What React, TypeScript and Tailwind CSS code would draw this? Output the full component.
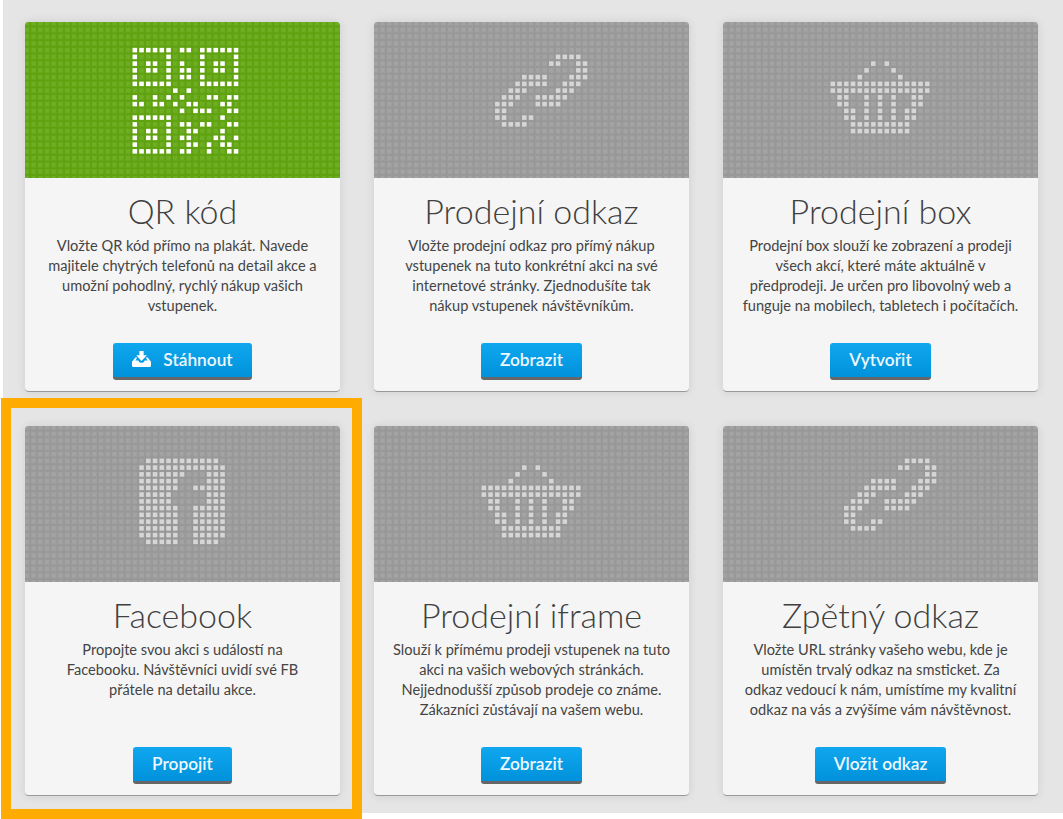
// dot icons: each row lists the [from, to] column runs that are lit
type Runs = number[][];

const qrIcon: Runs[] = [
  [[0, 5], [7, 8], [10, 15]],
  [[0, 0], [5, 5], [10, 10], [15, 15]],
  [[0, 0], [2, 3], [5, 5], [7, 7], [10, 10], [12, 13], [15, 15]],
  [[0, 0], [2, 3], [5, 5], [7, 8], [10, 10], [12, 13], [15, 15]],
  [[0, 0], [5, 5], [7, 8], [10, 10], [15, 15]],
  [[0, 5], [10, 15]],
  [[6, 6], [8, 8]],
  [[0, 0], [3, 3], [5, 5], [7, 7], [11, 12], [14, 15]],
  [[0, 1], [3, 4], [6, 6], [8, 9], [13, 14]],
  [[7, 7], [9, 11], [14, 15]],
  [[0, 5], [13, 13]],
  [[0, 0], [5, 5], [7, 8], [10, 11], [14, 15]],
  [[0, 0], [2, 3], [5, 5], [8, 9], [13, 13]],
  [[0, 0], [2, 3], [5, 5], [7, 8], [12, 13], [15, 15]],
  [[0, 0], [5, 5], [8, 9], [11, 11], [13, 14]],
  [[0, 5], [7, 8], [11, 11], [14, 15]],
];

const linkIcon: Runs[] = [
  [[9, 12]],
  [[8, 9], [12, 13]],
  [[12, 13]],
  [[4, 7], [11, 13]],
  [[3, 7], [10, 12]],
  [[2, 4], [9, 11]],
  [[1, 3], [6, 10]],
  [[0, 2], [6, 9]],
  [[0, 1]],
  [[0, 1], [4, 5]],
  [[1, 4]],
];

const basketIcon: Runs[] = [
  [[6, 6], [8, 8]],
  [[5, 5], [9, 9]],
  [[4, 4], [10, 10]],
  [[0, 14]],
  [[0, 14]],
  [[1, 2], [5, 5], [7, 7], [9, 9], [12, 13]],
  [[1, 2], [5, 5], [7, 7], [9, 9], [12, 13]],
  [[2, 3], [5, 5], [7, 7], [9, 9], [11, 12]],
  [[2, 3], [5, 5], [7, 7], [9, 9], [11, 12]],
  [[3, 11]],
  [[3, 11]],
];

const facebookIcon: Runs[] = [
  [[1, 11]],
  [[0, 12]],
  [[0, 6], [10, 12]],
  [[0, 5], [10, 12]],
  [[0, 5], [8, 12]],
  [[0, 4], [10, 12]],
  [[0, 4], [10, 12]],
  [[0, 5], [8, 12]],
  [[0, 5], [8, 12]],
  [[0, 5], [8, 12]],
  [[0, 5], [8, 12]],
  [[0, 5], [8, 12]],
  [[1, 5], [8, 11]],
];

const STEP = 6.75;
const DOT = 4.5;

function DotPanel({
  icon,
  col,
  row,
  active,
  id,
}: {
  icon: Runs[];
  col: number;
  row: number;
  active?: boolean;
  id: string;
}) {
  const dots: { x: number; y: number }[] = [];
  icon.forEach((runs, r) => {
    runs.forEach(([from, to]) => {
      for (let c = from; c <= to; c++) {
        dots.push({ x: (col + c) * STEP, y: (row + r) * STEP });
      }
    });
  });

  return (
    <svg width="315" height="156" className="block">
      <defs>
        <pattern id={id} x="-0.45" y="-1.15" width={STEP} height={STEP} patternUnits="userSpaceOnUse">
          <rect width={DOT} height={DOT} fill={active ? "#6dae23" : "#a3a3a3"} />
        </pattern>
      </defs>
      <rect width="315" height="156" fill={active ? "#60a110" : "#989898"} />
      <rect width="315" height="156" fill={`url(#${id})`} />
      <g transform="translate(-0.45 -1.15)">
        {dots.map((d, i) => (
          <rect key={i} x={d.x} y={d.y} width={DOT} height={DOT} fill={active ? "#ffffff" : "#d6d6d6"} />
        ))}
      </g>
    </svg>
  );
}

function DownloadIcon() {
  return (
    <svg width="19" height="16" viewBox="0 0 18 15" fill="#ffffff" className="mr-[12px] mb-[1px]">
      <path d="M7 0h4v4h3l-5 5.500L4 4h3z" />
      <path d="M0 14a1 1 0 0 0 1 1h16a1 1 0 0 0 1-1v-4l-3.200-4H13l1.800 3H12q-.5 2-2 2H8q-1.500 0-2-2H3.200L5 6H3.200L0 10z" />
    </svg>
  );
}

function Button({ children }: { children: React.ReactNode }) {
  return (
    <a
      href="#"
      className="flex h-[37.5px] items-center justify-center rounded-[3px] border-b-[3px] border-[#666666] bg-gradient-to-b from-[#10a7ef] to-[#0092db] px-[19px] text-[17.3px] font-semibold text-[#eef8fe]"
    >
      {children}
    </a>
  );
}

function Card({
  id,
  icon,
  col,
  row,
  active,
  title,
  lines,
  button,
  download,
}: {
  id: string;
  icon: Runs[];
  col: number;
  row: number;
  active?: boolean;
  title: string;
  lines: string[];
  button: string;
  download?: boolean;
}) {
  return (
    <div className="flex h-[370px] flex-col overflow-hidden rounded-[4px] border-b border-[#999999] bg-[#f5f5f5] shadow-[0_0_10px_rgba(0,0,0,0.1)]">
      <DotPanel id={id} icon={icon} col={col} row={row} active={active} />
      <h2 className="mt-[11px] text-center text-[34px] leading-[44px] font-light text-[#404040]">{title}</h2>
      <p className="mt-[3px] text-center text-[14.6px] leading-[20px] text-[#444444]">
        {lines.map((line) => (
          <span key={line} className="block">
            {line}
          </span>
        ))}
      </p>
      <div className="mt-auto mb-[11px] flex justify-center">
        <Button>
          {download && <DownloadIcon />}
          {button}
        </Button>
      </div>
    </div>
  );
}

export default function App() {
  return (
    <div className="h-[819px] bg-white">
      <div className="ml-[3px] h-[813px] bg-[#e5e5e5] pt-[22px] pl-[22px] font-['Lato',sans-serif]">
        <div className="grid grid-cols-[repeat(3,315px)] gap-[34px]">
          <Card
            id="p1"
            icon={qrIcon}
            col={16}
            row={4}
            active
            title="QR kód"
            lines={[
              "Vložte QR kód přímo na plakát. Navede",
              "majitele chytrých telefonů na detail akce a",
              "umožní pohodlný, rychlý nákup vašich",
              "vstupenek.",
            ]}
            button="Stáhnout"
            download
          />
          <Card
            id="p2"
            icon={linkIcon}
            col={18}
            row={5}
            title="Prodejní odkaz"
            lines={[
              "Vložte prodejní odkaz pro přímý nákup",
              "vstupenek na tuto konkrétní akci na své",
              "internetové stránky. Zjednodušíte tak",
              "nákup vstupenek návštěvníkům.",
            ]}
            button="Zobrazit"
          />
          <Card
            id="p3"
            icon={basketIcon}
            col={16}
            row={6}
            title="Prodejní box"
            lines={[
              "Prodejní box slouží ke zobrazení a prodeji",
              "všech akcí, které máte aktuálně v",
              "předprodeji. Je určen pro libovolný web a",
              "funguje na mobilech, tabletech i počítačích.",
            ]}
            button="Vytvořit"
          />
          <div className="relative">
            <Card
              id="p4"
              icon={facebookIcon}
              col={17}
              row={5}
              title="Facebook"
              lines={[
                "Propojte svou akci s událostí na",
                "Facebooku. Návštěvníci uvidí své FB",
                "přátele na detailu akce.",
              ]}
              button="Propojit"
            />
            {/* highlight frame over the card */}
            <div className="pointer-events-none absolute -top-[28px] -right-[22px] -bottom-[23px] -left-[24px] border-[10px] border-[#ffab00]" />
          </div>
          <Card
            id="p5"
            icon={basketIcon}
            col={16}
            row={6}
            title="Prodejní iframe"
            lines={[
              "Slouží k přímému prodeji vstupenek na tuto",
              "akci na vašich webových stránkách.",
              "Nejjednodušší způsob prodeje co známe.",
              "Zákazníci zůstávají na vašem webu.",
            ]}
            button="Zobrazit"
          />
          <Card
            id="p6"
            icon={linkIcon}
            col={18}
            row={5}
            title="Zpětný odkaz"
            lines={[
              "Vložte URL stránky vašeho webu, kde je",
              "umístěn trvalý odkaz na smsticket. Za",
              "odkaz vedoucí k nám, umístíme my kvalitní",
              "odkaz na vás a zvýšíme vám návštěvnost.",
            ]}
            button="Vložit odkaz"
          />
        </div>
      </div>
    </div>
  );
}
